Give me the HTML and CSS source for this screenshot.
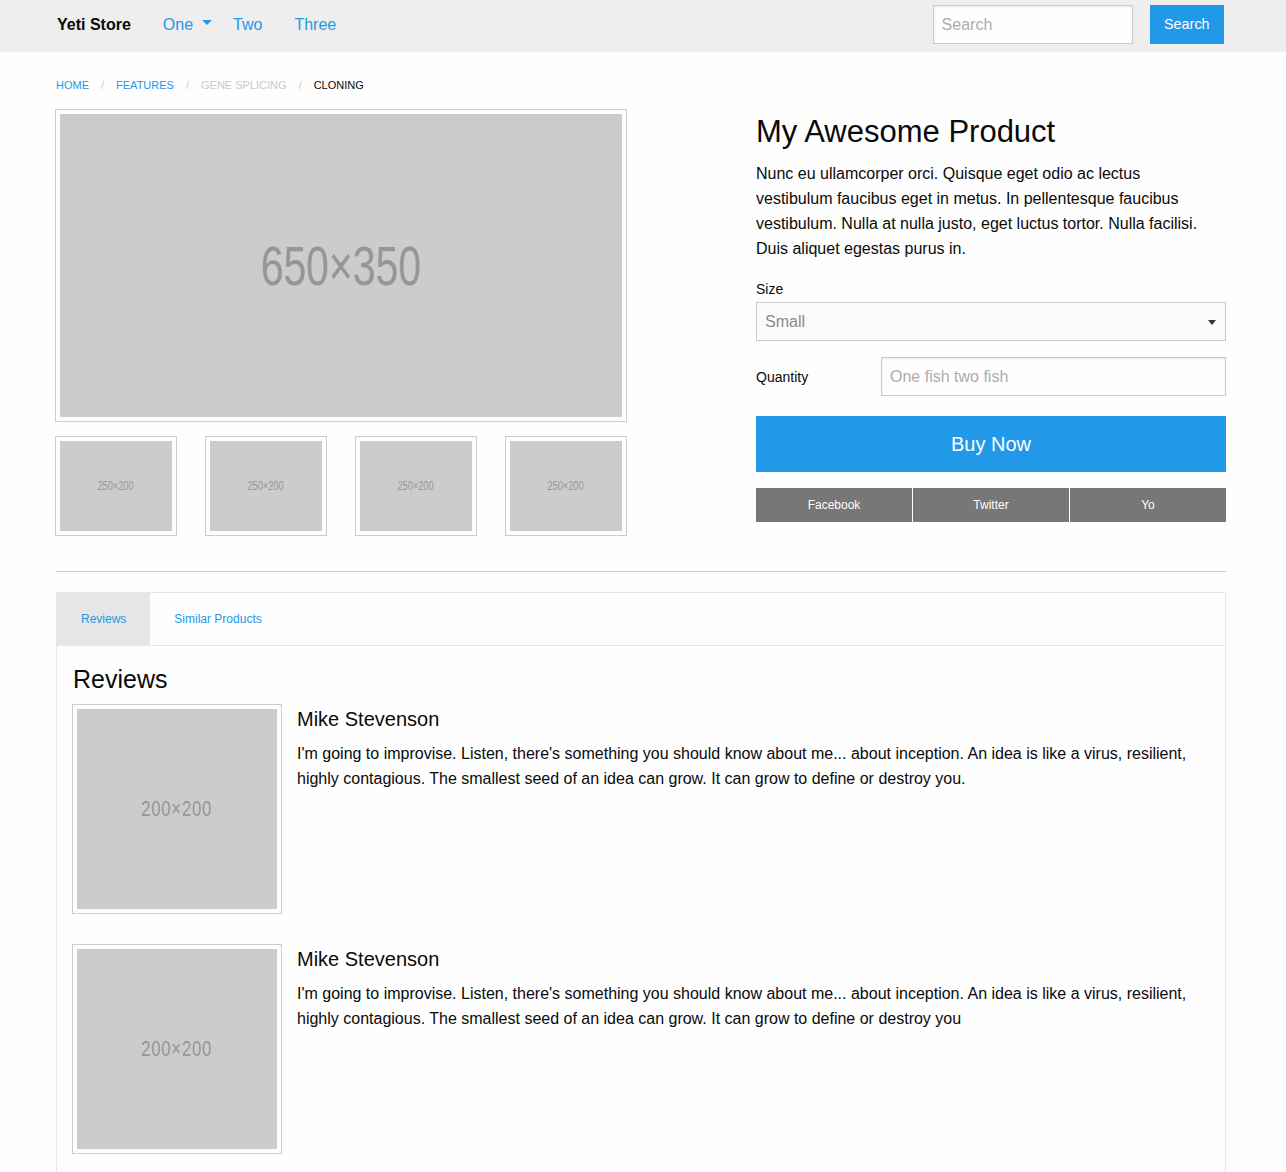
FILE: index.html
```html
<!DOCTYPE html>
<html lang="en">
<head>
<meta charset="utf-8">
<title>Yeti Store</title>
<link rel="stylesheet" href="styles.css">
</head>
<body>
<header class="top-bar">
  <ul class="menu">
    <li class="menu-text">Yeti Store</li>
    <li class="has-dropdown"><a href="#">One</a></li>
    <li><a href="#">Two</a></li>
    <li><a href="#">Three</a></li>
  </ul>
  <ul class="menu search-menu">
    <li><input class="search-input" type="search" placeholder="Search"></li>
    <li><button class="button" type="button">Search</button></li>
  </ul>
</header>

<main class="row">
  <nav>
    <ul class="breadcrumbs">
      <li><a href="#">Home</a></li>
      <li><a href="#">Features</a></li>
      <li class="disabled">Gene Splicing</li>
      <li class="current">Cloning</li>
    </ul>
  </nav>

  <section class="product">
    <div class="gallery">
      <div class="thumbnail"><div class="ph ph-main"><span>650×350</span></div></div>
      <div class="thumbs">
        <div class="thumbnail"><div class="ph ph-thumb"><span>250×200</span></div></div>
        <div class="thumbnail"><div class="ph ph-thumb"><span>250×200</span></div></div>
        <div class="thumbnail"><div class="ph ph-thumb"><span>250×200</span></div></div>
        <div class="thumbnail"><div class="ph ph-thumb"><span>250×200</span></div></div>
      </div>
    </div>

    <div class="info">
      <h3 class="title">My Awesome Product</h3>
      <p class="desc">Nunc eu ullamcorper orci. Quisque eget odio ac lectus<br>vestibulum faucibus eget in metus. In pellentesque faucibus<br>vestibulum. Nulla at nulla justo, eget luctus tortor. Nulla facilisi.<br>Duis aliquet egestas purus in.</p>
      <label class="field-label">Size</label>
      <div class="select-wrap">
        <select class="select">
          <option>Small</option>
          <option>Medium</option>
          <option>Large</option>
        </select>
      </div>
      <div class="qty">
        <label class="field-label">Quantity</label>
        <input class="text-input" type="text" placeholder="One fish two fish">
      </div>
      <a href="#" class="buy">Buy Now</a>
      <div class="share">
        <a href="#">Facebook</a>
        <a href="#">Twitter</a>
        <a href="#">Yo</a>
      </div>
    </div>
  </section>

  <hr class="divider">

  <section class="tabs-wrap">
    <ul class="tabs">
      <li class="is-active"><a href="#">Reviews</a></li>
      <li><a href="#">Similar Products</a></li>
    </ul>
    <div class="tabs-content">
      <h4 class="tabs-heading">Reviews</h4>
      <div class="media">
        <div class="media-img">
          <div class="thumbnail"><div class="ph ph-review"><span>200×200</span></div></div>
        </div>
        <div class="media-body">
          <h5>Mike Stevenson</h5>
          <p>I'm going to improvise. Listen, there's something you should know about me... about inception. An idea is like a virus, resilient, highly contagious. The smallest seed of an idea can grow. It can grow to define or destroy you.</p>
        </div>
      </div>
      <div class="media">
        <div class="media-img">
          <div class="thumbnail"><div class="ph ph-review"><span>200×200</span></div></div>
        </div>
        <div class="media-body">
          <h5>Mike Stevenson</h5>
          <p>I'm going to improvise. Listen, there's something you should know about me... about inception. An idea is like a virus, resilient, highly contagious. The smallest seed of an idea can grow. It can grow to define or destroy you</p>
        </div>
      </div>
    </div>
  </section>
</main>
</body>
</html>
```

FILE: styles.css
```css
* { box-sizing: border-box; }
html, body { margin: 0; padding: 0; }
body {
  font-family: "Liberation Sans", Arial, Helvetica, sans-serif;
  color: #0a0a0a;
  background: #fefefe;
  font-size: 16px;
}
a { color: #2199e8; text-decoration: none; }
ul { list-style: none; margin: 0; padding: 0; }

/* Top bar */
.top-bar {
  display: flex;
  justify-content: space-between;
  align-items: center;
  height: 52px;
  padding: 5px 62px 8px 41px;
  background: #eee;
}
.menu { display: flex; align-items: center; }
.menu li { font-size: 16px; line-height: 16px; }
.menu-text { font-weight: bold; padding: 0 16px; }
.menu a { display: block; padding: 0 16px; }
.has-dropdown a { position: relative; padding-right: 24px; }
.has-dropdown a::after {
  content: "";
  position: absolute;
  right: 5px;
  top: 3px;
  border-style: solid;
  border-width: 5px 5px 0 5px;
  border-color: #2199e8 transparent transparent transparent;
}
.search-input {
  display: block;
  width: 200px;
  height: 39px;
  margin-right: 17px;
  padding: 8px;
  border: 1px solid #cacaca;
  border-radius: 0;
  background: #fefefe;
  box-shadow: inset 0 1px 2px rgba(10,10,10,.1);
  font: 16px "Liberation Sans", Arial, sans-serif;
  color: #0a0a0a;
  -webkit-appearance: none;
  appearance: none;
}
.search-input::placeholder, .text-input::placeholder { color: #acacac; }
.button {
  display: block;
  height: 39px;
  padding: 0 14.4px;
  border: 0;
  background: #2199e8;
  color: #fefefe;
  font: 14.4px "Liberation Sans", Arial, sans-serif;
  line-height: 1;
  cursor: pointer;
}

/* Layout row */
.row { width: 1170px; margin-left: 56px; }

/* Breadcrumbs */
.breadcrumbs {
  display: flex;
  margin: 25px 0 17px;
  font-size: 11px;
  line-height: 16px;
  text-transform: uppercase;
}
.breadcrumbs li:not(:last-child)::after {
  content: "/";
  margin: 0 12px;
  color: #cacaca;
}
.breadcrumbs .disabled { color: #cacaca; }
.breadcrumbs .current { color: #0a0a0a; }

/* Product */
.product { display: flex; justify-content: space-between; }
.gallery { width: 570px; }
.info { width: 470px; }

.thumbnail {
  display: block;
  border: 4px solid #fefefe;
  box-shadow: 0 0 0 1px rgba(10,10,10,.2);
  margin-bottom: 16px;
}
.ph {
  display: flex;
  align-items: center;
  justify-content: center;
  overflow: hidden;
  background: #ccc;
  color: #969696;
  font-family: "Liberation Sans", Arial, sans-serif;
}
.ph span { display: inline-block; white-space: nowrap; line-height: 1; }
.ph-main { height: 303px; }
.ph-main span { font-size: 56px; transform: scaleX(.73); }
.ph-thumb { height: 90px; }
.ph-thumb span { font-size: 12px; transform: scaleX(.77); }
.ph-review { width: 200px; height: 200px; }
.ph-review span { font-size: 22px; transform: scaleX(.76); letter-spacing: 1px; }

.thumbs { display: grid; grid-template-columns: repeat(4, 1fr); gap: 30px; }

.title {
  margin: 0 0 8px;
  font-size: 31px;
  line-height: 43px;
  font-weight: normal;
}
.desc { margin: 0 0 16px; line-height: 25px; }
.field-label { display: block; font-size: 14px; line-height: 25px; }

.select-wrap { position: relative; margin-bottom: 16px; }
.select {
  display: block;
  width: 100%;
  height: 39px;
  padding: 0 8px;
  border: 1px solid #cacaca;
  border-radius: 0;
  background: #fafafa;
  color: #8a8a8a;
  font: 16px "Liberation Sans", Arial, sans-serif;
  -webkit-appearance: none;
  appearance: none;
}
.select-wrap::after {
  content: "";
  position: absolute;
  right: 10px;
  top: 18px;
  border-style: solid;
  border-width: 5px 4px 0 4px;
  border-color: #333 transparent transparent transparent;
  pointer-events: none;
}

.qty {
  display: grid;
  grid-template-columns: 125px 1fr;
  align-items: center;
  margin-bottom: 20px;
}
.qty .field-label { padding-top: 2px; }
.text-input {
  display: block;
  width: 100%;
  height: 39px;
  padding: 8px;
  border: 1px solid #cacaca;
  border-radius: 0;
  background: #fefefe;
  box-shadow: inset 0 1px 2px rgba(10,10,10,.1);
  font: 16px "Liberation Sans", Arial, sans-serif;
  color: #0a0a0a;
}

.buy {
  display: flex;
  align-items: center;
  justify-content: center;
  height: 56px;
  margin-bottom: 16px;
  background: #2199e8;
  color: #fefefe;
  font-size: 20px;
}
.share { display: flex; gap: 1px; }
.share a {
  flex: 1;
  display: flex;
  align-items: center;
  justify-content: center;
  height: 34px;
  background: #777;
  color: #fefefe;
  font-size: 12px;
}

.divider {
  height: 0;
  margin: 20px 0;
  border: 0;
  border-bottom: 1px solid #cacaca;
}

/* Tabs */
.tabs {
  display: flex;
  border: 1px solid #e6e6e6;
  background: #fefefe;
}
.tabs a {
  display: block;
  padding: 20px 24px;
  font-size: 12px;
  line-height: 12px;
}
.tabs .is-active a { background: #e6e6e6; }
.tabs-content {
  border: 1px solid #e6e6e6;
  border-top: 0;
  padding: 16px;
}
.tabs-heading {
  margin: 0 0 8px;
  font-size: 25px;
  line-height: 35px;
  font-weight: normal;
}
.media { display: flex; margin-bottom: 16px; }
.media-img { flex-shrink: 0; padding-right: 16px; }
.media-body h5 {
  margin: 0 0 8px;
  font-size: 20px;
  line-height: 28px;
  font-weight: normal;
}
.media-body p { margin: 0 0 16px; line-height: 25px; }
```
